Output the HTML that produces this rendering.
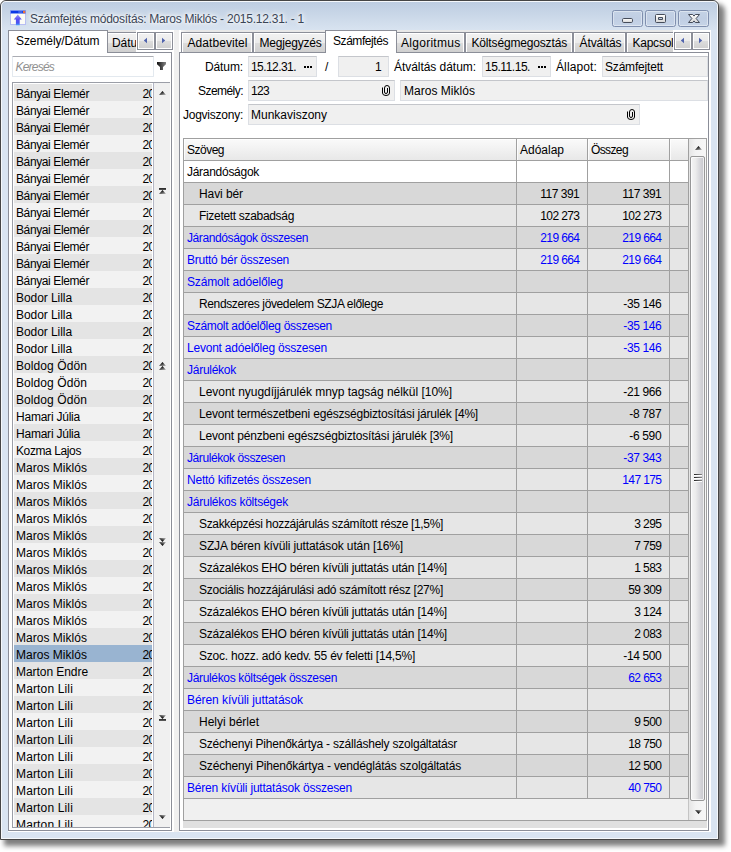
<!DOCTYPE html>
<html lang="hu"><head><meta charset="utf-8"><title>Számfejtés módosítás</title>
<style>
html,body{margin:0;padding:0}
body{width:731px;height:852px;overflow:hidden;background:#fff;position:relative;font-family:'Liberation Sans', sans-serif;font-size:12px;line-height:16px;color:#000}
div,svg{position:absolute;box-sizing:border-box}
.t{white-space:pre;height:16px}
#win{left:0;top:0;width:719px;height:840px;border:1px solid #454545;border-radius:6px 6px 0 0;background:#d9e4f1;box-shadow:5px 5px 5px 1px rgba(0,0,0,.5)}
#hl{left:0;top:0;right:0;bottom:0;border:1px solid rgba(255,255,255,.72);border-radius:5px 5px 0 0}
#tb{left:1px;top:1px;right:1px;height:28px;background:linear-gradient(#bdcde1,#d8e3f0);border-radius:4px 4px 0 0}
.cb{width:31px;height:17px;border:1px solid #7f8fae;border-radius:2.500px;background:linear-gradient(#c4d2e5,#c0cee3 50%,#c6d4e7);box-shadow:inset 0 0 0 1px rgba(255,255,255,.4)}
.tab{border:1px solid #8b8e98;border-bottom:0;background:linear-gradient(#f2f2f2,#ebebeb 50%,#dddddd 50%,#cfcfcf);box-shadow:inset 1px 1px 0 #fff,inset -1px 0 0 #fff}
.atab{border:1px solid #8b8e98;border-bottom:0;background:#fff}
.tsb{width:18px;height:18px;border:1px solid #8b8e98;background:linear-gradient(#f2f2f2,#ebebeb 50%,#dddddd 50%,#cfcfcf);box-shadow:inset 0 0 0 1px #fff}
.edit{border:1px solid #e3e9ef;border-top-color:#abadb3;border-radius:1px;background:#fff}
.fld{border:1px solid #dcdfe4;border-top-color:#c4c6cb;background:#f0f0f0}
.hd{background:linear-gradient(#fafafa,#f2f2f2 45%,#e8e8e8);box-shadow:inset 1px 1px 0 rgba(255,255,255,.8)}
.thumb{border:1px solid #979797;border-radius:2px;background:linear-gradient(90deg,#f5f5f5,#ececec 35%,#d6d6da 70%,#c6c6cc);box-shadow:inset 0 0 0 1px rgba(255,255,255,.7)}
</style></head>
<body>
<div id="win"><div id="hl"></div><div id="tb"></div></div>
<svg width="0" height="0" style="left:0;top:0"><defs><linearGradient id="gu" x1="0.2" y1="0" x2="0.8" y2="1"><stop offset="0.25" stop-color="#0a0a0a"/><stop offset="1" stop-color="#b4b4b4"/></linearGradient><linearGradient id="gd" x1="0.2" y1="1" x2="0.8" y2="0"><stop offset="0.3" stop-color="#0a0a0a"/><stop offset="1" stop-color="#b0b0b0"/></linearGradient></defs></svg>
<svg style="left:10px;top:10px" width="16" height="16" viewBox="0 0 16 16">
<defs><linearGradient id="ag" x1="0" y1="0" x2="0" y2="1"><stop offset="0" stop-color="#9a98f8"/><stop offset=".45" stop-color="#5a4ef2"/><stop offset=".8" stop-color="#4a55f0"/><stop offset="1" stop-color="#49a8ff"/></linearGradient></defs>
<rect x="0.5" y="0.5" width="15" height="14" fill="#fbfbf6" stroke="#b7bdf3"/>
<rect x="0.5" y="0.5" width="15" height="3" fill="#0a36e6" stroke="#8aa0f4" stroke-width=".6"/>
<rect x="8.3" y="1" width="4" height="2" fill="#3b63ee"/>
<rect x="13" y="0.8" width="2.2" height="2.4" fill="#f0703a"/>
<path d="M7.8 4.6 L11.8 9.4 L9.7 9.4 L9.7 15.2 L5.9 15.2 L5.9 9.4 L3.8 9.4 Z" fill="url(#ag)"/>
</svg>
<div class="t" style="top:11px;color:#3a4556;letter-spacing:-0.246px;left:30px;text-shadow:0 0 6px #fff,0 0 6px #fff,0 0 3px #fff;">Számfejtés módosítás: Maros Miklós - 2015.12.31. - 1</div>
<div class="cb" style="left:612px;top:10px"></div>
<div class="cb" style="left:645px;top:10px"></div>
<div class="cb" style="left:678px;top:10px"></div>
<svg style="left:612px;top:10px" width="97" height="17" viewBox="0 0 97 17">
<defs><linearGradient id="wg" x1="0" y1="0" x2="0" y2="1"><stop offset="0" stop-color="#fff"/><stop offset="1" stop-color="#d6d6d6"/></linearGradient></defs>
<rect x="10.5" y="8.5" width="10" height="4" rx="1.2" fill="url(#wg)" stroke="#454c5a"/>
<path d="M44.500 4.500 h8 q1 0 1 1 v6 q0 1 -1 1 h-8 q-1 0 -1 -1 v-6 q0 -1 1 -1 z M46.500 7.500 h4 v2 h-4 z" fill="url(#wg)" fill-rule="evenodd" stroke="#454c5a"/>
<path d="M76.500 4.500 h4.200 l1.300 1.600 l1.300 -1.600 h4.200 l-3.400 4 l3.400 4 h-4.200 l-1.300 -1.600 l-1.300 1.600 h-4.200 l3.400 -4 z" fill="url(#wg)" stroke="#454c5a" stroke-linejoin="round"/>
</svg>
<div style="left:8px;top:30px;width:703px;height:802px;background:#fff"></div>
<div style="left:174px;top:30px;width:5px;height:802px;background:#f0f0f0"></div>
<div style="left:108px;top:30px;width:28px;height:2px;background:#e6e6e6"></div>
<div style="left:181px;top:30px;width:492px;height:2px;background:linear-gradient(90deg,#f4f4f4,#e8e8e8 6px)"></div>
<div style="left:8px;top:52px;width:164px;height:779px;border:1px solid #8b8e98;box-sizing:border-box;background:#fff"></div>
<div class="tab" style="left:106px;top:32px;width:41px;height:20px"></div>
<div class="t" style="top:35px;letter-spacing:-0.09px;left:112px;width:24.5px;overflow:hidden;">Dátu</div>
<div class="atab" style="left:8px;top:30px;width:100px;height:23px"></div>
<div class="t" style="top:33px;letter-spacing:-0.093px;left:16px;">Személy/Dátum</div>
<div style="left:136px;top:31px;width:38px;height:21px;background:#fff"></div>
<div class="tsb" style="left:137px;top:32px"></div>
<div class="tsb" style="left:155px;top:32px"></div>
<svg style="left:137px;top:32px" width="36" height="18" viewBox="0 0 36 18"><path d="M10 5.800 V11.200 L6.800 8.500 Z" fill="#4f63ad"/><path d="M25 5.800 V11.200 L28.200 8.500 Z" fill="#4f63ad"/></svg>
<div class="edit" style="left:12px;top:56px;width:142px;height:21px"></div>
<div class="t" style="top:59px;color:#919191;letter-spacing:-0.79px;left:15.5px;font-style:italic;">Keresés</div>
<svg style="left:157px;top:62px" width="9" height="8" viewBox="0 0 9 8"><defs><linearGradient id="fg" x1="0" x2="1" y1="0" y2="0"><stop offset="0" stop-color="#111"/><stop offset="1" stop-color="#858585"/></linearGradient></defs><path d="M0 0 H9 V2.300 L6 5 V8 H3 V5 L0 2.300 Z" fill="url(#fg)"/></svg>
<div style="left:12px;top:82px;width:158px;height:746px;border:1px solid #9b9ea7;border-right:0;box-sizing:border-box;background:#fff"></div>
<div style="left:14px;top:84px;width:138px;height:743px;overflow:hidden">
<div style="left:0;top:0px;width:138px;height:17px;background:#e4e4e4"></div>
<div class="t" style="top:2px;letter-spacing:-0.388px;left:2px;">Bányai Elemér</div>
<div class="t" style="top:2px;letter-spacing:-0.676px;left:128.5px;">2015</div>
<div style="left:0;top:17px;width:138px;height:17px;background:#f2f2f2"></div>
<div class="t" style="top:19px;letter-spacing:-0.388px;left:2px;">Bányai Elemér</div>
<div class="t" style="top:19px;letter-spacing:-0.676px;left:128.5px;">2015</div>
<div style="left:0;top:34px;width:138px;height:17px;background:#e4e4e4"></div>
<div class="t" style="top:36px;letter-spacing:-0.388px;left:2px;">Bányai Elemér</div>
<div class="t" style="top:36px;letter-spacing:-0.676px;left:128.5px;">2015</div>
<div style="left:0;top:51px;width:138px;height:17px;background:#f2f2f2"></div>
<div class="t" style="top:53px;letter-spacing:-0.388px;left:2px;">Bányai Elemér</div>
<div class="t" style="top:53px;letter-spacing:-0.676px;left:128.5px;">2015</div>
<div style="left:0;top:68px;width:138px;height:17px;background:#e4e4e4"></div>
<div class="t" style="top:70px;letter-spacing:-0.388px;left:2px;">Bányai Elemér</div>
<div class="t" style="top:70px;letter-spacing:-0.676px;left:128.5px;">2015</div>
<div style="left:0;top:85px;width:138px;height:17px;background:#f2f2f2"></div>
<div class="t" style="top:87px;letter-spacing:-0.388px;left:2px;">Bányai Elemér</div>
<div class="t" style="top:87px;letter-spacing:-0.676px;left:128.5px;">2015</div>
<div style="left:0;top:102px;width:138px;height:17px;background:#e4e4e4"></div>
<div class="t" style="top:104px;letter-spacing:-0.388px;left:2px;">Bányai Elemér</div>
<div class="t" style="top:104px;letter-spacing:-0.676px;left:128.5px;">2015</div>
<div style="left:0;top:119px;width:138px;height:17px;background:#f2f2f2"></div>
<div class="t" style="top:121px;letter-spacing:-0.388px;left:2px;">Bányai Elemér</div>
<div class="t" style="top:121px;letter-spacing:-0.676px;left:128.5px;">2015</div>
<div style="left:0;top:136px;width:138px;height:17px;background:#e4e4e4"></div>
<div class="t" style="top:138px;letter-spacing:-0.388px;left:2px;">Bányai Elemér</div>
<div class="t" style="top:138px;letter-spacing:-0.676px;left:128.5px;">2015</div>
<div style="left:0;top:153px;width:138px;height:17px;background:#f2f2f2"></div>
<div class="t" style="top:155px;letter-spacing:-0.388px;left:2px;">Bányai Elemér</div>
<div class="t" style="top:155px;letter-spacing:-0.676px;left:128.5px;">2015</div>
<div style="left:0;top:170px;width:138px;height:17px;background:#e4e4e4"></div>
<div class="t" style="top:172px;letter-spacing:-0.388px;left:2px;">Bányai Elemér</div>
<div class="t" style="top:172px;letter-spacing:-0.676px;left:128.5px;">2015</div>
<div style="left:0;top:187px;width:138px;height:17px;background:#f2f2f2"></div>
<div class="t" style="top:189px;letter-spacing:-0.388px;left:2px;">Bányai Elemér</div>
<div class="t" style="top:189px;letter-spacing:-0.676px;left:128.5px;">2015</div>
<div style="left:0;top:204px;width:138px;height:17px;background:#e4e4e4"></div>
<div class="t" style="top:206px;letter-spacing:-0.064px;left:2px;">Bodor Lilla</div>
<div class="t" style="top:206px;letter-spacing:-0.676px;left:128.5px;">2015</div>
<div style="left:0;top:221px;width:138px;height:17px;background:#f2f2f2"></div>
<div class="t" style="top:223px;letter-spacing:-0.064px;left:2px;">Bodor Lilla</div>
<div class="t" style="top:223px;letter-spacing:-0.676px;left:128.5px;">2015</div>
<div style="left:0;top:238px;width:138px;height:17px;background:#e4e4e4"></div>
<div class="t" style="top:240px;letter-spacing:-0.064px;left:2px;">Bodor Lilla</div>
<div class="t" style="top:240px;letter-spacing:-0.676px;left:128.5px;">2015</div>
<div style="left:0;top:255px;width:138px;height:17px;background:#f2f2f2"></div>
<div class="t" style="top:257px;letter-spacing:-0.064px;left:2px;">Bodor Lilla</div>
<div class="t" style="top:257px;letter-spacing:-0.676px;left:128.5px;">2015</div>
<div style="left:0;top:272px;width:138px;height:17px;background:#e4e4e4"></div>
<div class="t" style="top:274px;letter-spacing:0.085px;left:2px;">Boldog Ödön</div>
<div class="t" style="top:274px;letter-spacing:-0.676px;left:128.5px;">2015</div>
<div style="left:0;top:289px;width:138px;height:17px;background:#f2f2f2"></div>
<div class="t" style="top:291px;letter-spacing:0.085px;left:2px;">Boldog Ödön</div>
<div class="t" style="top:291px;letter-spacing:-0.676px;left:128.5px;">2015</div>
<div style="left:0;top:306px;width:138px;height:17px;background:#e4e4e4"></div>
<div class="t" style="top:308px;letter-spacing:0.085px;left:2px;">Boldog Ödön</div>
<div class="t" style="top:308px;letter-spacing:-0.676px;left:128.5px;">2015</div>
<div style="left:0;top:323px;width:138px;height:17px;background:#f2f2f2"></div>
<div class="t" style="top:325px;letter-spacing:-0.224px;left:2px;">Hamari Júlia</div>
<div class="t" style="top:325px;letter-spacing:-0.676px;left:128.5px;">2015</div>
<div style="left:0;top:340px;width:138px;height:17px;background:#e4e4e4"></div>
<div class="t" style="top:342px;letter-spacing:-0.224px;left:2px;">Hamari Júlia</div>
<div class="t" style="top:342px;letter-spacing:-0.676px;left:128.5px;">2015</div>
<div style="left:0;top:357px;width:138px;height:17px;background:#f2f2f2"></div>
<div class="t" style="top:359px;letter-spacing:-0.398px;left:2px;">Kozma Lajos</div>
<div class="t" style="top:359px;letter-spacing:-0.676px;left:128.5px;">2015</div>
<div style="left:0;top:374px;width:138px;height:17px;background:#e4e4e4"></div>
<div class="t" style="top:376px;letter-spacing:0.026px;left:2px;">Maros Miklós</div>
<div class="t" style="top:376px;letter-spacing:-0.676px;left:128.5px;">2015</div>
<div style="left:0;top:391px;width:138px;height:17px;background:#f2f2f2"></div>
<div class="t" style="top:393px;letter-spacing:0.026px;left:2px;">Maros Miklós</div>
<div class="t" style="top:393px;letter-spacing:-0.676px;left:128.5px;">2015</div>
<div style="left:0;top:408px;width:138px;height:17px;background:#e4e4e4"></div>
<div class="t" style="top:410px;letter-spacing:0.026px;left:2px;">Maros Miklós</div>
<div class="t" style="top:410px;letter-spacing:-0.676px;left:128.5px;">2015</div>
<div style="left:0;top:425px;width:138px;height:17px;background:#f2f2f2"></div>
<div class="t" style="top:427px;letter-spacing:0.026px;left:2px;">Maros Miklós</div>
<div class="t" style="top:427px;letter-spacing:-0.676px;left:128.5px;">2015</div>
<div style="left:0;top:442px;width:138px;height:17px;background:#e4e4e4"></div>
<div class="t" style="top:444px;letter-spacing:0.026px;left:2px;">Maros Miklós</div>
<div class="t" style="top:444px;letter-spacing:-0.676px;left:128.5px;">2015</div>
<div style="left:0;top:459px;width:138px;height:17px;background:#f2f2f2"></div>
<div class="t" style="top:461px;letter-spacing:0.026px;left:2px;">Maros Miklós</div>
<div class="t" style="top:461px;letter-spacing:-0.676px;left:128.5px;">2015</div>
<div style="left:0;top:476px;width:138px;height:17px;background:#e4e4e4"></div>
<div class="t" style="top:478px;letter-spacing:0.026px;left:2px;">Maros Miklós</div>
<div class="t" style="top:478px;letter-spacing:-0.676px;left:128.5px;">2015</div>
<div style="left:0;top:493px;width:138px;height:17px;background:#f2f2f2"></div>
<div class="t" style="top:495px;letter-spacing:0.026px;left:2px;">Maros Miklós</div>
<div class="t" style="top:495px;letter-spacing:-0.676px;left:128.5px;">2015</div>
<div style="left:0;top:510px;width:138px;height:17px;background:#e4e4e4"></div>
<div class="t" style="top:512px;letter-spacing:0.026px;left:2px;">Maros Miklós</div>
<div class="t" style="top:512px;letter-spacing:-0.676px;left:128.5px;">2015</div>
<div style="left:0;top:527px;width:138px;height:17px;background:#f2f2f2"></div>
<div class="t" style="top:529px;letter-spacing:0.026px;left:2px;">Maros Miklós</div>
<div class="t" style="top:529px;letter-spacing:-0.676px;left:128.5px;">2015</div>
<div style="left:0;top:544px;width:138px;height:17px;background:#e4e4e4"></div>
<div class="t" style="top:546px;letter-spacing:0.026px;left:2px;">Maros Miklós</div>
<div class="t" style="top:546px;letter-spacing:-0.676px;left:128.5px;">2015</div>
<div style="left:0;top:561px;width:138px;height:17px;background:#99b4d1"></div>
<div class="t" style="top:563px;letter-spacing:0.026px;left:2px;">Maros Miklós</div>
<div class="t" style="top:563px;letter-spacing:-0.676px;left:128.5px;">2015</div>
<div style="left:0;top:578px;width:138px;height:17px;background:#e4e4e4"></div>
<div class="t" style="top:580px;letter-spacing:-0.059px;left:2px;">Marton Endre</div>
<div class="t" style="top:580px;letter-spacing:-0.676px;left:128.5px;">2015</div>
<div style="left:0;top:595px;width:138px;height:17px;background:#f2f2f2"></div>
<div class="t" style="top:597px;letter-spacing:0.149px;left:2px;">Marton Lili</div>
<div class="t" style="top:597px;letter-spacing:-0.676px;left:128.5px;">2015</div>
<div style="left:0;top:612px;width:138px;height:17px;background:#e4e4e4"></div>
<div class="t" style="top:614px;letter-spacing:0.149px;left:2px;">Marton Lili</div>
<div class="t" style="top:614px;letter-spacing:-0.676px;left:128.5px;">2015</div>
<div style="left:0;top:629px;width:138px;height:17px;background:#f2f2f2"></div>
<div class="t" style="top:631px;letter-spacing:0.149px;left:2px;">Marton Lili</div>
<div class="t" style="top:631px;letter-spacing:-0.676px;left:128.5px;">2015</div>
<div style="left:0;top:646px;width:138px;height:17px;background:#e4e4e4"></div>
<div class="t" style="top:648px;letter-spacing:0.149px;left:2px;">Marton Lili</div>
<div class="t" style="top:648px;letter-spacing:-0.676px;left:128.5px;">2015</div>
<div style="left:0;top:663px;width:138px;height:17px;background:#f2f2f2"></div>
<div class="t" style="top:665px;letter-spacing:0.149px;left:2px;">Marton Lili</div>
<div class="t" style="top:665px;letter-spacing:-0.676px;left:128.5px;">2015</div>
<div style="left:0;top:680px;width:138px;height:17px;background:#e4e4e4"></div>
<div class="t" style="top:682px;letter-spacing:0.149px;left:2px;">Marton Lili</div>
<div class="t" style="top:682px;letter-spacing:-0.676px;left:128.5px;">2015</div>
<div style="left:0;top:697px;width:138px;height:17px;background:#f2f2f2"></div>
<div class="t" style="top:699px;letter-spacing:0.149px;left:2px;">Marton Lili</div>
<div class="t" style="top:699px;letter-spacing:-0.676px;left:128.5px;">2015</div>
<div style="left:0;top:714px;width:138px;height:17px;background:#e4e4e4"></div>
<div class="t" style="top:716px;letter-spacing:0.149px;left:2px;">Marton Lili</div>
<div class="t" style="top:716px;letter-spacing:-0.676px;left:128.5px;">2015</div>
<div style="left:0;top:731px;width:138px;height:17px;background:#f2f2f2"></div>
<div class="t" style="top:733px;letter-spacing:0.149px;left:2px;">Marton Lili</div>
<div class="t" style="top:733px;letter-spacing:-0.676px;left:128.5px;">2015</div>
</div>
<div style="left:153px;top:83px;width:17px;height:744px;background:#f0f0f0;border-left:1px solid #b4b7c6;box-sizing:border-box"></div>
<svg style="left:159px;top:91px" width="7" height="4" viewBox="0 0 7 4"><path d="M0 4 L3.500 0 L7 4 Z" fill="url(#gu)"/></svg>
<div style="left:159px;top:188px;width:7px;height:2px;background:linear-gradient(#222,#555)"></div>
<svg style="left:159px;top:190px" width="7" height="4" viewBox="0 0 7 4"><path d="M0 4 L3.500 0 L7 4 Z" fill="url(#gu)"/></svg>
<svg style="left:159px;top:362px" width="7" height="4" viewBox="0 0 7 4"><path d="M0 4 L3.500 0 L7 4 Z" fill="url(#gu)"/></svg>
<svg style="left:159px;top:366px" width="7" height="4" viewBox="0 0 7 4"><path d="M0 4 L3.500 0 L7 4 Z" fill="url(#gu)"/></svg>
<svg style="left:159px;top:538px" width="7" height="4" viewBox="0 0 7 4"><path d="M0 0 L3.500 4 L7 0 Z" fill="url(#gd)"/></svg>
<svg style="left:159px;top:542px" width="7" height="4" viewBox="0 0 7 4"><path d="M0 0 L3.500 4 L7 0 Z" fill="url(#gd)"/></svg>
<svg style="left:159px;top:715px" width="7" height="4" viewBox="0 0 7 4"><path d="M0 0 L3.500 4 L7 0 Z" fill="url(#gd)"/></svg>
<div style="left:159px;top:719px;width:7px;height:2px;background:linear-gradient(#222,#666)"></div>
<svg style="left:159px;top:815px" width="7" height="4" viewBox="0 0 7 4"><path d="M0 0 L3.500 4 L7 0 Z" fill="url(#gd)"/></svg>
<div style="left:179px;top:52px;width:530px;height:779px;border:1px solid #8b8e98;box-sizing:border-box;background:#fff"></div>
<div class="tab" style="left:181px;top:32px;width:72px;height:20px"></div>
<div class="t" style="top:35px;letter-spacing:0.057px;left:187.5px;">Adatbevitel</div>
<div class="tab" style="left:253px;top:32px;width:74px;height:20px"></div>
<div class="t" style="top:35px;letter-spacing:-0.203px;left:259.5px;">Megjegyzés</div>
<div class="tab" style="left:395px;top:32px;width:70px;height:20px"></div>
<div class="t" style="top:35px;letter-spacing:0.281px;left:401px;">Algoritmus</div>
<div class="tab" style="left:465px;top:32px;width:108px;height:20px"></div>
<div class="t" style="top:35px;letter-spacing:-0.16px;left:471.5px;">Költségmegosztás</div>
<div class="tab" style="left:573px;top:32px;width:53px;height:20px"></div>
<div class="t" style="top:35px;letter-spacing:-0.086px;left:579.5px;">Átváltás</div>
<div class="tab" style="left:626px;top:32px;width:75px;height:20px"></div>
<div class="t" style="top:35px;letter-spacing:-0.243px;left:632.5px;width:40.5px;overflow:hidden;">Kapcsol</div>
<div class="atab" style="left:325px;top:30px;width:72px;height:23px"></div>
<div class="t" style="top:33px;letter-spacing:-0.436px;left:333px;">Számfejtés</div>
<div style="left:673px;top:31px;width:38px;height:21px;background:#fff"></div>
<div class="tsb" style="left:674px;top:32px"></div>
<div class="tsb" style="left:692px;top:32px"></div>
<svg style="left:674px;top:32px" width="36" height="18" viewBox="0 0 36 18"><path d="M10 5.800 V11.200 L6.800 8.500 Z" fill="#4f63ad"/><path d="M25 5.800 V11.200 L28.200 8.500 Z" fill="#4f63ad"/></svg>
<div class="t" style="top:59px;letter-spacing:-0.115px;left:205px;">Dátum:</div>
<div class="fld" style="left:248px;top:56px;width:69px;height:21px"></div>
<div class="t" style="top:59px;letter-spacing:-0.561px;left:251px;">15.12.31.</div>
<div style="left:304px;top:66px;width:2px;height:2px;background:#000"></div>
<div style="left:307px;top:66px;width:2px;height:2px;background:#000"></div>
<div style="left:310px;top:66px;width:2px;height:2px;background:#000"></div>
<div class="t" style="top:59px;letter-spacing:1.656px;left:325px;">/</div>
<div class="fld" style="left:338px;top:56px;width:51px;height:21px"></div>
<div class="t" style="top:59px;letter-spacing:-0.688px;left:375px;">1</div>
<div class="t" style="top:59px;letter-spacing:-0.048px;left:394px;">Átváltás dátum:</div>
<div class="fld" style="left:482px;top:56px;width:69px;height:21px"></div>
<div class="t" style="top:59px;letter-spacing:-0.462px;left:485px;">15.11.15.</div>
<div style="left:538px;top:66px;width:2px;height:2px;background:#000"></div>
<div style="left:541px;top:66px;width:2px;height:2px;background:#000"></div>
<div style="left:544px;top:66px;width:2px;height:2px;background:#000"></div>
<div class="t" style="top:59px;letter-spacing:0.121px;left:556px;">Állapot:</div>
<div class="fld" style="left:602px;top:56px;width:106px;height:21px"></div>
<div class="t" style="top:59px;letter-spacing:-0.185px;left:605px;">Számfejtett</div>
<div class="t" style="top:83px;letter-spacing:-0.545px;left:198px;">Személy:</div>
<div class="fld" style="left:248px;top:80px;width:147px;height:21px"></div>
<div class="t" style="top:83px;letter-spacing:-0.677px;left:251px;">123</div>
<svg style="left:382px;top:85px" width="9" height="12" viewBox="0 0 9 12"><path d="M0.500 2.500 V8 Q0.500 10.500 4 10.500 Q7.500 10.500 7.500 8 V3 Q7.500 0.500 5 0.500 Q2.500 0.500 2.500 3 V7 Q2.500 8.500 4 8.500 Q5.500 8.500 5.500 7 V3" fill="none" stroke="#000" stroke-width="1"/></svg>
<div class="fld" style="left:400px;top:80px;width:308px;height:21px"></div>
<div class="t" style="top:83px;letter-spacing:0.026px;left:404px;">Maros Miklós</div>
<div class="t" style="top:107px;letter-spacing:-0.246px;left:183px;">Jogviszony:</div>
<div class="fld" style="left:248px;top:104px;width:392px;height:21px"></div>
<div class="t" style="top:107px;letter-spacing:-0.003px;left:251px;">Munkaviszony</div>
<svg style="left:627px;top:109px" width="9" height="12" viewBox="0 0 9 12"><path d="M0.500 2.500 V8 Q0.500 10.500 4 10.500 Q7.500 10.500 7.500 8 V3 Q7.500 0.500 5 0.500 Q2.500 0.500 2.500 3 V7 Q2.500 8.500 4 8.500 Q5.500 8.500 5.500 7 V3" fill="none" stroke="#000" stroke-width="1"/></svg>
<div style="left:183px;top:138px;width:524px;height:683px;border:1px solid #a0a0a0;box-sizing:border-box;background:#f0f0f0"></div>
<div class="hd" style="left:184px;top:139px;width:332px;height:21px"></div>
<div class="t" style="top:142px;letter-spacing:-0.505px;left:187px;">Szöveg</div>
<div class="hd" style="left:517px;top:139px;width:70px;height:21px"></div>
<div class="t" style="top:142px;letter-spacing:-0.007px;left:520px;">Adóalap</div>
<div class="hd" style="left:588px;top:139px;width:81px;height:21px"></div>
<div class="t" style="top:142px;letter-spacing:-0.615px;left:591px;">Összeg</div>
<div class="hd" style="left:670px;top:139px;width:18px;height:21px"></div>
<div style="left:184px;top:160px;width:505px;height:1px;background:#a0a0a0"></div>
<div style="left:516px;top:139px;width:1px;height:21px;background:#a0a0a0"></div>
<div style="left:587px;top:139px;width:1px;height:21px;background:#a0a0a0"></div>
<div style="left:669px;top:139px;width:1px;height:21px;background:#a0a0a0"></div>
<div style="left:688px;top:139px;width:1px;height:21px;background:#a0a0a0"></div>
<div style="left:184px;top:161px;width:505px;height:21px;background:#fff"></div>
<div style="left:184px;top:182px;width:505px;height:1px;background:#a0a0a0"></div>
<div class="t" style="top:164px;letter-spacing:-0.283px;left:187px;">Járandóságok</div>
<div style="left:184px;top:183px;width:505px;height:21px;background:#d8d8d8"></div>
<div style="left:184px;top:204px;width:505px;height:1px;background:#a0a0a0"></div>
<div class="t" style="top:186px;letter-spacing:-0.086px;left:199px;">Havi bér</div>
<div class="t" style="top:186px;letter-spacing:-0.5px;left:540.3px;">117 391</div>
<div class="t" style="top:186px;letter-spacing:-0.5px;left:622.3px;">117 391</div>
<div style="left:184px;top:205px;width:505px;height:21px;background:#e6e6e6"></div>
<div style="left:184px;top:226px;width:505px;height:1px;background:#a0a0a0"></div>
<div class="t" style="top:208px;letter-spacing:-0.319px;left:199px;">Fizetett szabadság</div>
<div class="t" style="top:208px;letter-spacing:-0.627px;left:540.3px;">102 273</div>
<div class="t" style="top:208px;letter-spacing:-0.627px;left:622.3px;">102 273</div>
<div style="left:184px;top:227px;width:505px;height:21px;background:#d8d8d8"></div>
<div style="left:184px;top:248px;width:505px;height:1px;background:#a0a0a0"></div>
<div class="t" style="top:230px;color:#0000ff;letter-spacing:-0.401px;left:187px;">Járandóságok összesen</div>
<div class="t" style="top:230px;color:#0000ff;letter-spacing:-0.627px;left:540.3px;">219 664</div>
<div class="t" style="top:230px;color:#0000ff;letter-spacing:-0.627px;left:622.3px;">219 664</div>
<div style="left:184px;top:249px;width:505px;height:21px;background:#e6e6e6"></div>
<div style="left:184px;top:270px;width:505px;height:1px;background:#a0a0a0"></div>
<div class="t" style="top:252px;color:#0000ff;letter-spacing:-0.249px;left:187px;">Bruttó bér összesen</div>
<div class="t" style="top:252px;color:#0000ff;letter-spacing:-0.627px;left:540.3px;">219 664</div>
<div class="t" style="top:252px;color:#0000ff;letter-spacing:-0.627px;left:622.3px;">219 664</div>
<div style="left:184px;top:271px;width:505px;height:21px;background:#d8d8d8"></div>
<div style="left:184px;top:292px;width:505px;height:1px;background:#a0a0a0"></div>
<div class="t" style="top:274px;color:#0000ff;letter-spacing:-0.161px;left:187px;">Számolt adóelőleg</div>
<div style="left:184px;top:293px;width:505px;height:21px;background:#e6e6e6"></div>
<div style="left:184px;top:314px;width:505px;height:1px;background:#a0a0a0"></div>
<div class="t" style="top:296px;letter-spacing:-0.367px;left:199px;">Rendszeres jövedelem SZJA előlege</div>
<div class="t" style="top:296px;letter-spacing:-0.386px;left:623.3px;">-35 146</div>
<div style="left:184px;top:315px;width:505px;height:21px;background:#d8d8d8"></div>
<div style="left:184px;top:336px;width:505px;height:1px;background:#a0a0a0"></div>
<div class="t" style="top:318px;color:#0000ff;letter-spacing:-0.299px;left:187px;">Számolt adóelőleg összesen</div>
<div class="t" style="top:318px;color:#0000ff;letter-spacing:-0.386px;left:623.3px;">-35 146</div>
<div style="left:184px;top:337px;width:505px;height:21px;background:#e6e6e6"></div>
<div style="left:184px;top:358px;width:505px;height:1px;background:#a0a0a0"></div>
<div class="t" style="top:340px;color:#0000ff;letter-spacing:-0.218px;left:187px;">Levont adóelőleg összesen</div>
<div class="t" style="top:340px;color:#0000ff;letter-spacing:-0.386px;left:623.3px;">-35 146</div>
<div style="left:184px;top:359px;width:505px;height:21px;background:#d8d8d8"></div>
<div style="left:184px;top:380px;width:505px;height:1px;background:#a0a0a0"></div>
<div class="t" style="top:362px;color:#0000ff;letter-spacing:-0.262px;left:187px;">Járulékok</div>
<div style="left:184px;top:381px;width:505px;height:21px;background:#e6e6e6"></div>
<div style="left:184px;top:402px;width:505px;height:1px;background:#a0a0a0"></div>
<div class="t" style="top:384px;letter-spacing:-0.025px;left:199px;">Levont nyugdíjjárulék mnyp tagság nélkül [10%]</div>
<div class="t" style="top:384px;letter-spacing:-0.386px;left:623.3px;">-21 966</div>
<div style="left:184px;top:403px;width:505px;height:21px;background:#d8d8d8"></div>
<div style="left:184px;top:424px;width:505px;height:1px;background:#a0a0a0"></div>
<div class="t" style="top:406px;letter-spacing:-0.185px;left:199px;">Levont természetbeni egészségbiztosítási járulék [4%]</div>
<div class="t" style="top:406px;letter-spacing:-0.339px;left:629.3px;">-8 787</div>
<div style="left:184px;top:425px;width:505px;height:21px;background:#e6e6e6"></div>
<div style="left:184px;top:446px;width:505px;height:1px;background:#a0a0a0"></div>
<div class="t" style="top:428px;letter-spacing:-0.17px;left:199px;">Levont pénzbeni egészségbiztosítási járulék [3%]</div>
<div class="t" style="top:428px;letter-spacing:-0.339px;left:629.3px;">-6 590</div>
<div style="left:184px;top:447px;width:505px;height:21px;background:#d8d8d8"></div>
<div style="left:184px;top:468px;width:505px;height:1px;background:#a0a0a0"></div>
<div class="t" style="top:450px;color:#0000ff;letter-spacing:-0.411px;left:187px;">Járulékok összesen</div>
<div class="t" style="top:450px;color:#0000ff;letter-spacing:-0.386px;left:623.3px;">-37 343</div>
<div style="left:184px;top:469px;width:505px;height:21px;background:#e6e6e6"></div>
<div style="left:184px;top:490px;width:505px;height:1px;background:#a0a0a0"></div>
<div class="t" style="top:472px;color:#0000ff;letter-spacing:-0.225px;left:187px;">Nettó kifizetés összesen</div>
<div class="t" style="top:472px;color:#0000ff;letter-spacing:-0.627px;left:622.3px;">147 175</div>
<div style="left:184px;top:491px;width:505px;height:21px;background:#d8d8d8"></div>
<div style="left:184px;top:512px;width:505px;height:1px;background:#a0a0a0"></div>
<div class="t" style="top:494px;color:#0000ff;letter-spacing:-0.231px;left:187px;">Járulékos költségek</div>
<div style="left:184px;top:513px;width:505px;height:21px;background:#e6e6e6"></div>
<div style="left:184px;top:534px;width:505px;height:1px;background:#a0a0a0"></div>
<div class="t" style="top:516px;letter-spacing:-0.343px;left:199px;">Szakképzési hozzájárulás számított része [1,5%]</div>
<div class="t" style="top:516px;letter-spacing:-0.606px;left:634.3px;">3 295</div>
<div style="left:184px;top:535px;width:505px;height:21px;background:#d8d8d8"></div>
<div style="left:184px;top:556px;width:505px;height:1px;background:#a0a0a0"></div>
<div class="t" style="top:538px;letter-spacing:-0.123px;left:199px;">SZJA béren kívüli juttatások után [16%]</div>
<div class="t" style="top:538px;letter-spacing:-0.606px;left:634.3px;">7 759</div>
<div style="left:184px;top:557px;width:505px;height:21px;background:#e6e6e6"></div>
<div style="left:184px;top:578px;width:505px;height:1px;background:#a0a0a0"></div>
<div class="t" style="top:560px;letter-spacing:-0.216px;left:199px;">Százalékos EHO béren kívüli juttatás után [14%]</div>
<div class="t" style="top:560px;letter-spacing:-0.606px;left:634.3px;">1 583</div>
<div style="left:184px;top:579px;width:505px;height:21px;background:#d8d8d8"></div>
<div style="left:184px;top:600px;width:505px;height:1px;background:#a0a0a0"></div>
<div class="t" style="top:582px;letter-spacing:-0.253px;left:199px;">Szociális hozzájárulási adó számított rész [27%]</div>
<div class="t" style="top:582px;letter-spacing:-0.617px;left:628.3px;">59 309</div>
<div style="left:184px;top:601px;width:505px;height:21px;background:#e6e6e6"></div>
<div style="left:184px;top:622px;width:505px;height:1px;background:#a0a0a0"></div>
<div class="t" style="top:604px;letter-spacing:-0.216px;left:199px;">Százalékos EHO béren kívüli juttatás után [14%]</div>
<div class="t" style="top:604px;letter-spacing:-0.606px;left:634.3px;">3 124</div>
<div style="left:184px;top:623px;width:505px;height:21px;background:#d8d8d8"></div>
<div style="left:184px;top:644px;width:505px;height:1px;background:#a0a0a0"></div>
<div class="t" style="top:626px;letter-spacing:-0.216px;left:199px;">Százalékos EHO béren kívüli juttatás után [14%]</div>
<div class="t" style="top:626px;letter-spacing:-0.606px;left:634.3px;">2 083</div>
<div style="left:184px;top:645px;width:505px;height:21px;background:#e6e6e6"></div>
<div style="left:184px;top:666px;width:505px;height:1px;background:#a0a0a0"></div>
<div class="t" style="top:648px;letter-spacing:-0.215px;left:199px;">Szoc. hozz. adó kedv. 55 év feletti [14,5%]</div>
<div class="t" style="top:648px;letter-spacing:-0.386px;left:623.3px;">-14 500</div>
<div style="left:184px;top:667px;width:505px;height:21px;background:#d8d8d8"></div>
<div style="left:184px;top:688px;width:505px;height:1px;background:#a0a0a0"></div>
<div class="t" style="top:670px;color:#0000ff;letter-spacing:-0.336px;left:187px;">Járulékos költségek összesen</div>
<div class="t" style="top:670px;color:#0000ff;letter-spacing:-0.617px;left:628.3px;">62 653</div>
<div style="left:184px;top:689px;width:505px;height:21px;background:#e6e6e6"></div>
<div style="left:184px;top:710px;width:505px;height:1px;background:#a0a0a0"></div>
<div class="t" style="top:692px;color:#0000ff;letter-spacing:-0.061px;left:187px;">Béren kívüli juttatások</div>
<div style="left:184px;top:711px;width:505px;height:21px;background:#d8d8d8"></div>
<div style="left:184px;top:732px;width:505px;height:1px;background:#a0a0a0"></div>
<div class="t" style="top:714px;letter-spacing:-0.003px;left:199px;">Helyi bérlet</div>
<div class="t" style="top:714px;letter-spacing:-0.606px;left:634.3px;">9 500</div>
<div style="left:184px;top:733px;width:505px;height:21px;background:#e6e6e6"></div>
<div style="left:184px;top:754px;width:505px;height:1px;background:#a0a0a0"></div>
<div class="t" style="top:736px;letter-spacing:-0.216px;left:199px;">Széchenyi Pihenőkártya - szálláshely szolgáltatásr</div>
<div class="t" style="top:736px;letter-spacing:-0.617px;left:628.3px;">18 750</div>
<div style="left:184px;top:755px;width:505px;height:21px;background:#d8d8d8"></div>
<div style="left:184px;top:776px;width:505px;height:1px;background:#a0a0a0"></div>
<div class="t" style="top:758px;letter-spacing:-0.18px;left:199px;">Széchenyi Pihenőkártya - vendéglátás szolgáltatás</div>
<div class="t" style="top:758px;letter-spacing:-0.617px;left:628.3px;">12 500</div>
<div style="left:184px;top:777px;width:505px;height:21px;background:#e6e6e6"></div>
<div style="left:184px;top:798px;width:505px;height:1px;background:#a0a0a0"></div>
<div class="t" style="top:780px;color:#0000ff;letter-spacing:-0.201px;left:187px;">Béren kívüli juttatások összesen</div>
<div class="t" style="top:780px;color:#0000ff;letter-spacing:-0.617px;left:628.3px;">40 750</div>
<div style="left:516px;top:161px;width:1px;height:638px;background:#a0a0a0"></div>
<div style="left:587px;top:161px;width:1px;height:638px;background:#a0a0a0"></div>
<div style="left:669px;top:161px;width:1px;height:638px;background:#a0a0a0"></div>
<div style="left:688px;top:161px;width:1px;height:638px;background:#a0a0a0"></div>
<div style="left:688px;top:799px;width:1px;height:21px;background:#c4c4c4"></div>
<div style="left:689px;top:139px;width:17px;height:681px;background:linear-gradient(90deg,#e5e5e5,#f3f3f3 40%,#f7f7f7)"></div>
<div class="thumb" style="left:690px;top:156px;width:15px;height:645px"></div>
<div style="left:694px;top:474px;width:8px;height:1px;background:linear-gradient(90deg,#222,#888)"></div>
<div style="left:694px;top:475px;width:8px;height:1px;background:#fff"></div>
<div style="left:694px;top:477px;width:8px;height:1px;background:linear-gradient(90deg,#222,#888)"></div>
<div style="left:694px;top:478px;width:8px;height:1px;background:#fff"></div>
<div style="left:694px;top:480px;width:8px;height:1px;background:linear-gradient(90deg,#222,#888)"></div>
<div style="left:694px;top:481px;width:8px;height:1px;background:#fff"></div>
<svg style="left:695px;top:146px" width="7" height="4" viewBox="0 0 7 4"><path d="M0 4 L3.500 0 L7 4 Z" fill="url(#gu)"/></svg>
<svg style="left:695px;top:810px" width="7" height="4" viewBox="0 0 7 4"><path d="M0 0 L3.500 4 L7 0 Z" fill="url(#gd)"/></svg>
<div style="left:183px;top:821px;width:524px;height:7px;background:#e0e0e0"></div>
</body></html>
